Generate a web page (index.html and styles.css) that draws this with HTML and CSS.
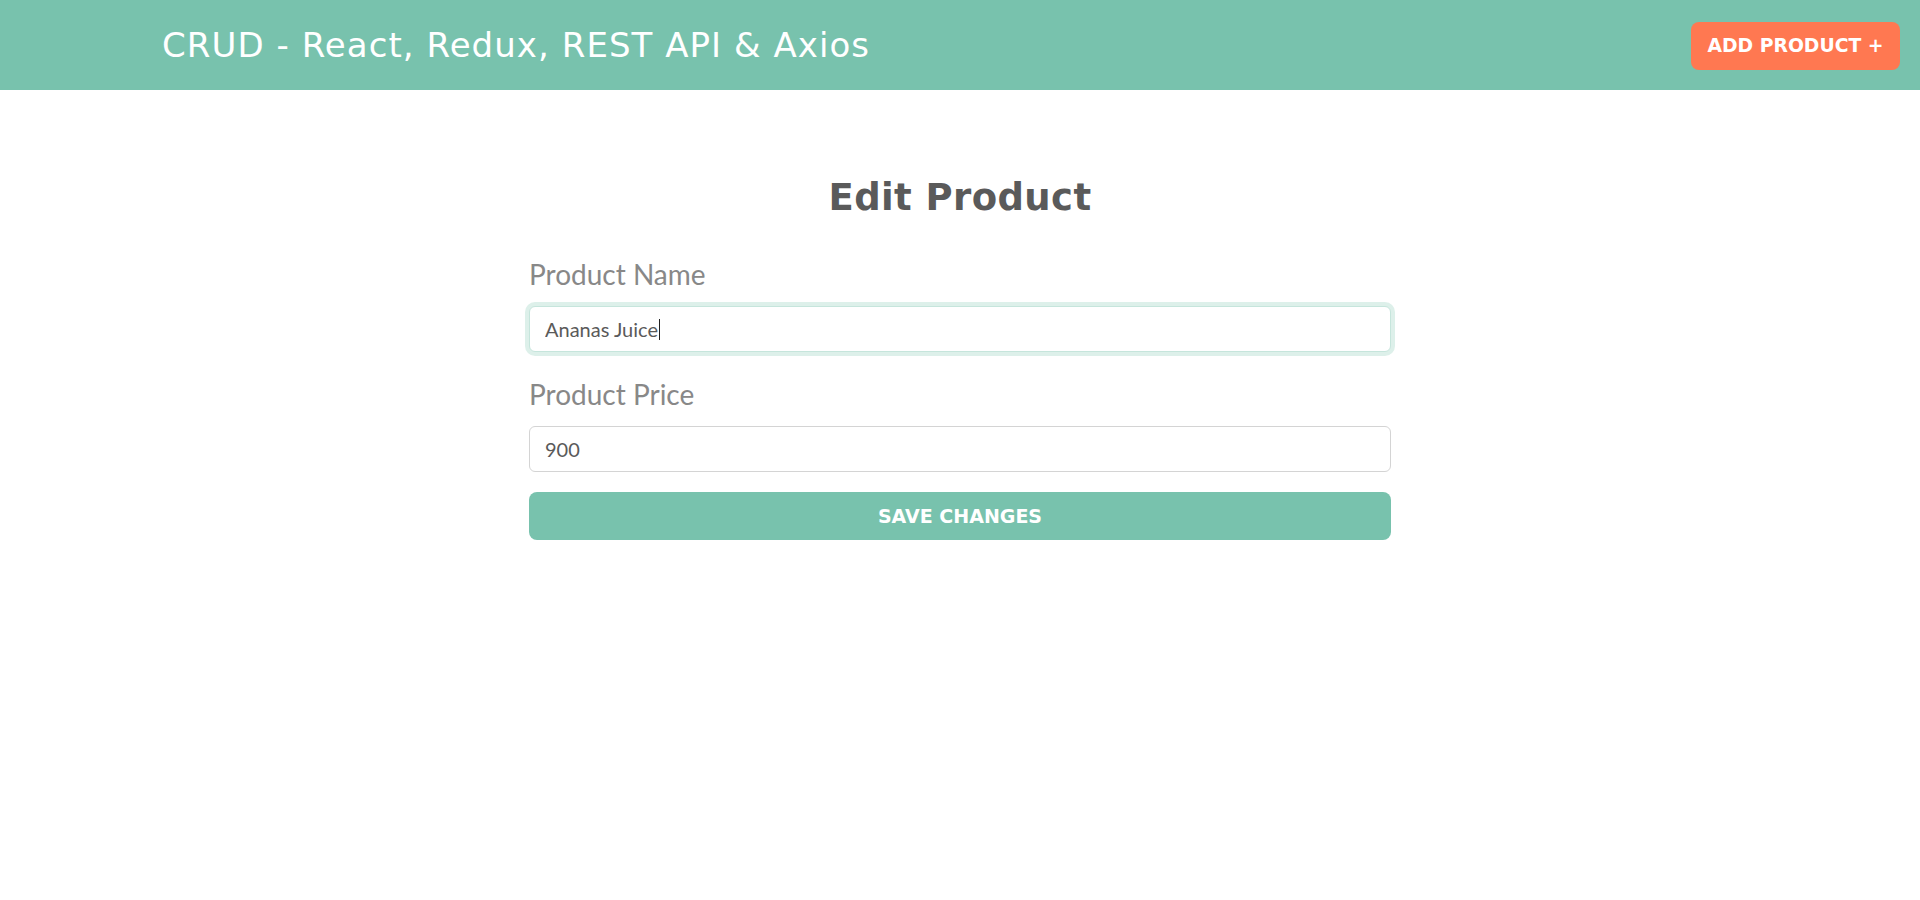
FILE: index.html
```html
<!DOCTYPE html>
<html lang="en">
<head>
<meta charset="utf-8">
<title>CRUD - React, Redux, REST API &amp; Axios</title>
<link rel="stylesheet" href="styles.css">
</head>
<body>
<header class="navbar">
  <h1 class="brand">CRUD - React, Redux, REST API &amp; Axios</h1>
  <a class="btn-add" href="#">Add Product +</a>
</header>
<main class="page">
  <h2 class="title">Edit Product</h2>
  <form class="product-form">
    <div class="form-group">
      <label class="form-label" for="name">Product Name</label>
      <div class="field">
        <input class="form-control focused" id="name" type="text" value="Ananas Juice">
        <span class="caret-layer" aria-hidden="true"><span class="ghost">Ananas Juice</span><i class="caret"></i></span>
      </div>
    </div>
    <div class="form-group">
      <label class="form-label" for="price">Product Price</label>
      <div class="field">
        <input class="form-control" id="price" type="number" value="900">
      </div>
    </div>
    <button class="btn-save" type="submit">Save Changes</button>
  </form>
</main>
</body>
</html>
```
FILE: styles.css
```css
* { box-sizing: border-box; }

body {
  margin: 0;
  background: #ffffff;
  font-family: Lato, "Open Sans", sans-serif;
  color: #888888;
}

.navbar {
  height: 90px;
  background: #78c2ad;
  display: flex;
  align-items: center;
  justify-content: space-between;
  padding: 0 20px 0 162px;
}

.brand {
  margin: 0;
  font-family: "DejaVu Sans", Inter, sans-serif;
  font-weight: 400;
  font-size: 34px;
  line-height: 40px;
  color: #ffffff;
  letter-spacing: 1.05px;
}

.btn-add {
  display: flex;
  align-items: center;
  justify-content: center;
  width: 209px;
  height: 48px;
  margin-top: 1px;
  background: #ff7851;
  color: #ffffff;
  border-radius: 8px;
  text-decoration: none;
  text-transform: uppercase;
  font-family: "DejaVu Sans", Inter, sans-serif;
  font-weight: 700;
  font-size: 18.8px;
}

.page {
  width: 862px;
  margin: 0 auto;
  padding-top: 84px;
}

.title {
  margin: 0 0 30px;
  text-align: center;
  font-family: "DejaVu Sans", Inter, sans-serif;
  font-weight: 700;
  font-size: 37px;
  line-height: 48px;
  color: #5a5a5a;
  letter-spacing: 0.4px;
}

.form-group {
  margin-bottom: 20px;
}

.form-label {
  display: block;
  margin-bottom: 10px;
  font-size: 28px;
  line-height: 44px;
  color: #888888;
}

.field {
  position: relative;
}

.form-control {
  display: block;
  width: 100%;
  height: 46px;
  padding: 0 15px;
  border: 1px solid #d4d4d4;
  border-radius: 6px;
  background: #ffffff;
  font-family: Lato, "Open Sans", sans-serif;
  font-size: 20px;
  color: #5a5a5a;
  outline: none;
  -moz-appearance: textfield;
}

.form-control::-webkit-outer-spin-button,
.form-control::-webkit-inner-spin-button {
  -webkit-appearance: none;
  margin: 0;
}

.form-control.focused {
  border-color: #c6e5dc;
  box-shadow: 0 0 0 4px rgba(120, 194, 173, 0.25);
}

.caret-layer {
  position: absolute;
  left: 16px;
  top: 0;
  height: 46px;
  display: flex;
  align-items: center;
  pointer-events: none;
  font-size: 20px;
  color: transparent;
}

.caret {
  display: block;
  width: 1px;
  height: 21px;
  margin-left: 1px;
  background: #222222;
}

.btn-save {
  display: block;
  width: 100%;
  height: 48px;
  border: none;
  border-radius: 8px;
  background: #78c2ad;
  color: #ffffff;
  text-transform: uppercase;
  font-family: "DejaVu Sans", Inter, sans-serif;
  font-weight: 700;
  font-size: 19px;
  cursor: pointer;
}
```
